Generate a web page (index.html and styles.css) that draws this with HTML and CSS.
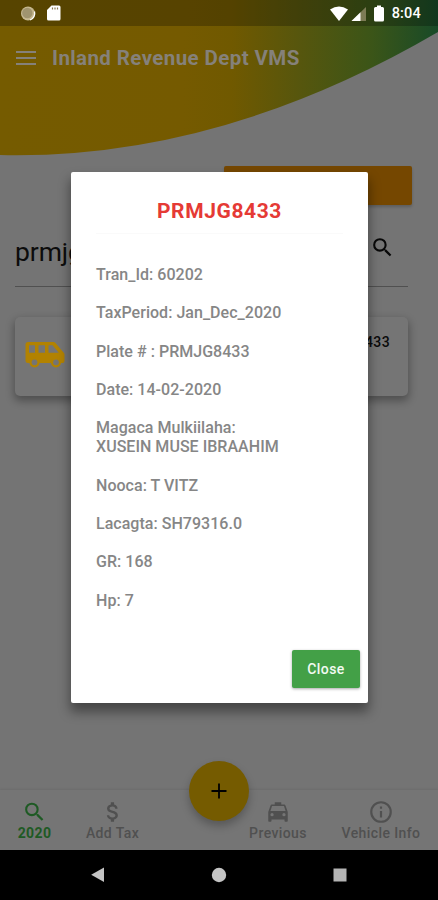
FILE: index.html
```
<!DOCTYPE html>
<html lang="en">
<head>
    <meta charset="UTF-8">
    <meta name="viewport" content="width=device-width, initial-scale=1.0">
    <title>Inland Revenue Dept VMS</title>
    <link rel="stylesheet" href="styles.css">
</head>
<body>
    <div class="screen">
        <svg class="wave" viewBox="0 0 438 160" aria-hidden="true">
            <defs>
                <linearGradient id="wave-fill" x1="0" y1="0" x2="1" y2="0">
                    <stop offset="0" stop-color="#755b00"/>
                    <stop offset="0.42" stop-color="#755a00"/>
                    <stop offset="0.53" stop-color="#705900"/>
                    <stop offset="0.68" stop-color="#57560d"/>
                    <stop offset="0.85" stop-color="#3b5518"/>
                    <stop offset="1" stop-color="#184a28"/>
                </linearGradient>
            </defs>
            <path fill="url(#wave-fill)" d="M0 0H438V32Q219 160 0 155Z"/>
        </svg>

        <div class="statusbar">
            <svg class="status-left" width="42" height="18" viewBox="0 0 42 18">
                <circle cx="8" cy="8.500" r="7" fill="#c6b890"/>
                <circle cx="7.300" cy="8" r="5.200" fill="#a0946f"/>
                <path d="M10 15A7 7 0 0 0 14.500 6.500" fill="none" stroke="#fff" stroke-width="1.300"/>
                <path fill="#fff" d="M31.500 .5h7.500q1.500 0 1.500 1.500v12q0 1.500-1.500 1.500H28.500q-1.500 0-1.500-1.500V5z"/>
                <path d="M32.500 2.500v2M35 2.500v2M37.500 2.500v2" stroke="#8a7a50" stroke-width="1.200"/>
            </svg>
            <div class="status-right">
                <svg width="56" height="18" viewBox="0 0 56 18">
                    <path fill="#fff" d="M0 4.500Q9-1.500 18 4.500L9 16z"/>
                    <path fill="#7c7b55" d="M36 2v14H21.500z"/>
                    <path fill="#fff" d="M30.500 7.300V16h-9z"/>
                    <path fill="#fff" d="M47 .5h4V2h1.500q1.500 0 1.500 1.500v11.500q0 1.500-1.500 1.500h-7q-1.500 0-1.500-1.500V3.500q0-1.500 1.500-1.500H47z"/>
                </svg>
                <span>8:04</span>
            </div>
        </div>

        <header class="header">
            <svg width="20" height="14" viewBox="0 0 20 14">
                <path d="M0 1h20M0 7h20M0 13h20" stroke="#85817a" stroke-width="2"/>
            </svg>
            <h1>Inland Revenue Dept VMS</h1>
        </header>

        <main class="content">
            <div class="orange-btn"></div>
            <div class="search">
                <span>prmjg8433</span>
                <svg width="25" height="25" viewBox="0 0 24 24">
                    <path fill="#080808" d="M15.500 14h-.79l-.28-.27A6.470 6.470 0 0 0 16 9.500 6.500 6.500 0 1 0 9.500 16c1.610 0 3.090-.59 4.230-1.570l.27.28v.79l5 4.990L20.490 19zm-6 0a4.500 4.500 0 1 1 0-9 4.500 4.500 0 0 1 0 9z"/>
                </svg>
            </div>
            <div class="card">
                <svg width="42" height="28" viewBox="0 0 42 28">
                    <path fill="#b28200" fill-rule="evenodd" d="M4 1h25.500q1 0 2 1l8 9.500q1 1 1 2V20q0 2-2 2H4q-2.500 0-2.500-2.500V3.500Q1.500 1 4 1zM5 4.200v7.600h6V4.200zM14.500 4.200v7.600h6.500V4.200zM24.500 4.200v7.600h10.300l-6.300-7.600z"/>
                    <circle cx="10.500" cy="21.300" r="4" fill="#747474" stroke="#b28200" stroke-width="2.200"/>
                    <circle cx="32" cy="21.300" r="4" fill="#747474" stroke="#b28200" stroke-width="2.200"/>
                </svg>
                <span>PRMJG8433</span>
            </div>
        </main>

        <nav class="tabs">
            <a class="tab tab-year active">
                <svg width="25" height="25" viewBox="0 0 24 24">
                    <path fill="currentColor" d="M15.500 14h-.79l-.28-.27A6.470 6.470 0 0 0 16 9.500 6.500 6.500 0 1 0 9.500 16c1.610 0 3.090-.59 4.230-1.570l.27.28v.79l5 4.990L20.490 19zm-6 0a4.500 4.500 0 1 1 0-9 4.500 4.500 0 0 1 0 9z"/>
                </svg>
                <span>2020</span>
            </a>
            <a class="tab tab-add">
                <svg width="26" height="26" viewBox="0 0 24 24">
                    <path fill="currentColor" d="M11.800 10.900c-2.270-.59-3-1.200-3-2.150 0-1.090 1.010-1.850 2.700-1.850 1.780 0 2.440.85 2.500 2.100h2.210c-.07-1.720-1.120-3.300-3.210-3.810V3h-3v2.160c-1.940.42-3.500 1.680-3.500 3.610 0 2.310 1.910 3.460 4.700 4.130 2.500.6 3 1.480 3 2.410 0 .69-.49 1.790-2.700 1.790-2.060 0-2.870-.92-2.980-2.100h-2.200c.12 2.190 1.760 3.420 3.680 3.830V21h3v-2.150c1.950-.37 3.500-1.500 3.500-3.550 0-2.840-2.430-3.810-4.700-4.400z"/>
                </svg>
                <span>Add Tax</span>
            </a>
            <a class="tab tab-prev">
                <svg width="26" height="26" viewBox="0 0 24 24">
                    <path fill="currentColor" d="M18.920 6.010C18.720 5.420 18.160 5 17.500 5H15V3H9v2H6.500c-.66 0-1.210.42-1.420 1.010L3 12v8c0 .55.450 1 1 1h1c.55 0 1-.45 1-1v-1h12v1c0 .55.450 1 1 1h1c.55 0 1-.45 1-1v-8zM6.500 16a1.500 1.500 0 1 1 0-3 1.500 1.500 0 0 1 0 3zm11 0a1.500 1.500 0 1 1 0-3 1.500 1.500 0 0 1 0 3zM5 11l1.500-4.500h11L19 11z"/>
                </svg>
                <span>Previous</span>
            </a>
            <a class="tab tab-info">
                <svg width="26" height="26" viewBox="0 0 24 24">
                    <path fill="currentColor" d="M11 7h2v2h-2zm0 4h2v6h-2zm1-9a10 10 0 1 0 0 20 10 10 0 0 0 0-20zm0 18a8 8 0 1 1 0-16 8 8 0 0 1 0 16z"/>
                </svg>
                <span>Vehicle Info</span>
            </a>
            <button class="fab" aria-label="Add">
                <svg width="16" height="16" viewBox="0 0 16 16">
                    <path d="M8 .5v15M.5 8h15" stroke="#000" stroke-width="1.800"/>
                </svg>
            </button>
        </nav>

        <div class="sysnav">
            <svg width="14" height="16" viewBox="0 0 14 16"><path fill="#c4c4c4" d="M13 .5v14.500L.2 7.800z"/></svg>
            <svg width="16" height="16" viewBox="0 0 16 16"><circle cx="8" cy="8" r="7.200" fill="#c4c4c4"/></svg>
            <svg width="14" height="14" viewBox="0 0 14 14"><path fill="#b4b4b4" d="M.5.5h13v13H.5z"/></svg>
        </div>

        <div class="dialog">
            <h2>PRMJG8433</h2>
            <div class="details">
                <p>Tran_Id: 60202</p>
                <p>TaxPeriod: Jan_Dec_2020</p>
                <p>Plate # : PRMJG8433</p>
                <p>Date: 14-02-2020</p>
                <p>Magaca Mulkiilaha:<br>XUSEIN MUSE IBRAAHIM</p>
                <p>Nooca: T VITZ</p>
                <p>Lacagta: SH79316.0</p>
                <p>GR: 168</p>
                <p>Hp: 7</p>
            </div>
            <button class="close-btn">Close</button>
        </div>
    </div>
</body>
</html>
```
FILE: styles.css
```
* {
    box-sizing: border-box;
}

body {
    margin: 0;
    font-family: Roboto, sans-serif;
    background-color: #747474;
}

h1,
h2,
p {
    margin: 0;
}

.screen {
    position: relative;
    display: flex;
    flex-direction: column;
    width: 438px;
    height: 900px;
    overflow: hidden;
}

/* curved header background */
.wave {
    position: absolute;
    top: 0;
    left: 0;
    width: 438px;
    height: 160px;
}

.statusbar {
    position: relative;
    display: flex;
    justify-content: space-between;
    align-items: center;
    height: 26px;
    padding: 1px 17px 0 20px;
    background-color: rgba(0, 0, 0, 0.25);
}

.status-right {
    display: flex;
    align-items: center;
    gap: 6px;
    color: #fff;
    font-size: 14.5px;
    font-weight: 500;
    line-height: 18px;
    letter-spacing: 0.2px;
}

.header {
    position: relative;
    display: flex;
    align-items: center;
    gap: 16px;
    height: 64px;
    padding: 0 16px;
}

.header h1 {
    color: #85817a;
    font-size: 20.5px;
    font-weight: 700;
    letter-spacing: 0.4px;
}

.content {
    flex: 1;
    padding: 76px 30px 0 15px;
}

.orange-btn {
    width: 188px;
    height: 39px;
    margin-left: auto;
    margin-right: -4px;
    border-radius: 2px;
    background-color: #754700;
    box-shadow: 0 2px 3px rgba(0, 0, 0, 0.2);
}

.search {
    display: flex;
    justify-content: space-between;
    height: 82px;
    padding: 30px 13px 0 0;
    border-bottom: 1px solid #505050;
    color: #0c0c0c;
    font-size: 26.5px;
    line-height: 34px;
    letter-spacing: -0.1px;
}

.card {
    display: flex;
    justify-content: space-between;
    height: 79px;
    margin-top: 30px;
    padding: 24px 18px 0 9px;
    border-radius: 5px;
    background-color: #757575;
    box-shadow: 0 4px 8px 1px rgba(0, 0, 0, 0.32);
}

.card span {
    margin-top: -8px;
    color: #0a0a0a;
    font-size: 14px;
    font-weight: 500;
    line-height: 18px;
    letter-spacing: 0.4px;
}

.tabs {
    position: relative;
    height: 60px;
    display: flex;
    background-color: #757575;
    box-shadow: 0 -1px 2px rgba(0, 0, 0, 0.08);
}

.tab {
    display: flex;
    flex-direction: column;
    align-items: center;
    padding-top: 9px;
    color: #505050;
    font-size: 14px;
    font-weight: 500;
    line-height: 16px;
    letter-spacing: 0.4px;
    white-space: nowrap;
}

.tab svg {
    height: 26px;
}

.tab.active {
    color: #1e5a24;
    font-weight: 700;
}

.tab-year {
    width: 69px;
}

.tab-add {
    width: 87px;
}

.tab-prev {
    width: 94px;
    margin-left: 75px;
}

.tab-info {
    width: 112px;
}

.fab {
    position: absolute;
    top: -29px;
    left: 189px;
    display: flex;
    justify-content: center;
    align-items: center;
    width: 60px;
    height: 60px;
    padding: 0;
    border: none;
    border-radius: 50%;
    background-color: #755b00;
    box-shadow: 0 5px 9px rgba(0, 0, 0, 0.25);
}

.sysnav {
    display: flex;
    justify-content: center;
    align-items: center;
    gap: 106px;
    height: 50px;
    background-color: #000;
}

.dialog {
    position: absolute;
    top: 172px;
    left: 71px;
    display: flex;
    flex-direction: column;
    width: 297px;
    height: 531px;
    padding: 26px 8px 15px 25px;
    border-radius: 2px;
    background-color: #fff;
    box-shadow: 0 8px 12px 1px rgba(0, 0, 0, 0.4);
}

.dialog h2 {
    margin-right: 17px;
    height: 36px;
    border-bottom: 1px solid #fafafa;
    color: #e53a35;
    font-size: 21px;
    font-weight: 700;
    line-height: 26px;
    letter-spacing: 0.6px;
    text-align: center;
}

.details {
    flex: 1;
    padding-top: 31px;
    color: #868686;
    font-size: 16px;
    font-weight: 500;
    line-height: 19.2px;
    letter-spacing: 0.03px;
}

.details p {
    margin-bottom: 19.1px;
}

.close-btn {
    align-self: flex-end;
    width: 68px;
    height: 38px;
    border: none;
    border-radius: 2px;
    background-color: #43a047;
    box-shadow: 0 1px 3px rgba(0, 0, 0, 0.35);
    color: #f2faf2;
    font-family: inherit;
    font-size: 14px;
    font-weight: 500;
    letter-spacing: 0.4px;
}
```
